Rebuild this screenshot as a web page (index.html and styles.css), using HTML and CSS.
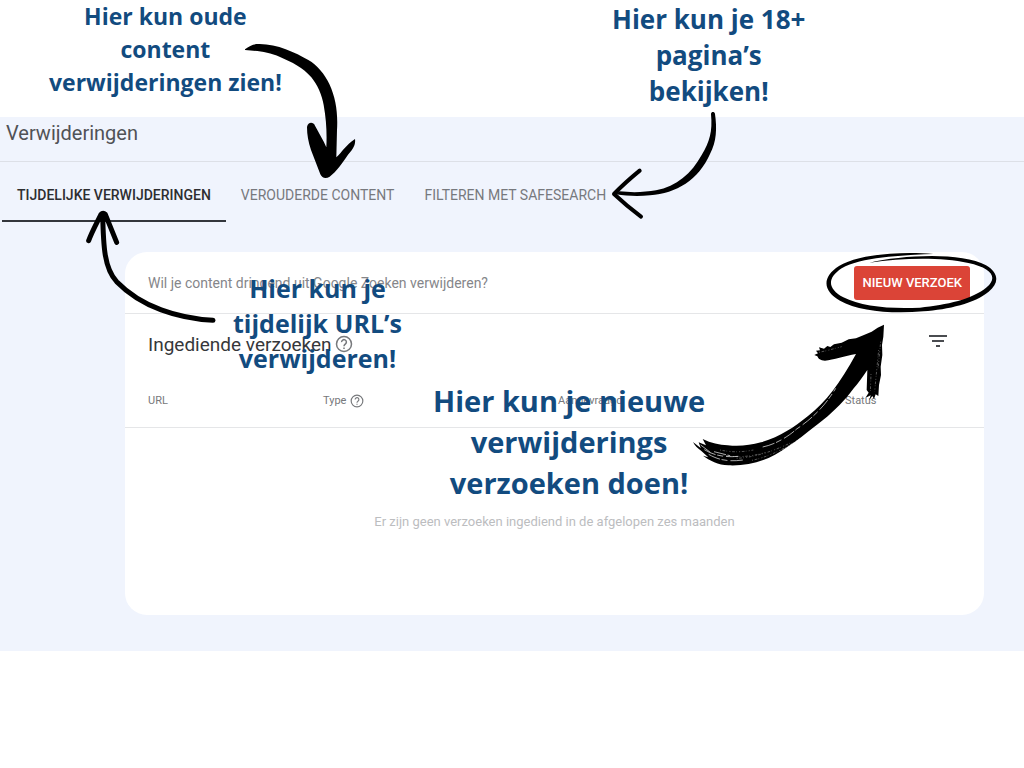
FILE: index.html
```html
<!DOCTYPE html>
<html lang="nl">
<head>
    <meta charset="UTF-8">
    <meta name="viewport" content="width=device-width, initial-scale=1.0">
    <title>Verwijderingen</title>
    <link rel="stylesheet" href="styles.css">
</head>
<body>
    <main class="console">
        <header class="header">
            <h1>Verwijderingen</h1>
        </header>
        <nav class="tabs">
            <a href="#tijdelijk" class="tab active">TIJDELIJKE VERWIJDERINGEN</a>
            <a href="#verouderd" class="tab">VEROUDERDE CONTENT</a>
            <a href="#safesearch" class="tab">FILTEREN MET SAFESEARCH</a>
        </nav>
        <section class="card" id="tijdelijk">
            <div class="card-top">
                <p>Wil je content dringend uit Google Zoeken verwijderen?</p>
                <button type="button" class="new-request">NIEUW VERZOEK</button>
            </div>
            <div class="card-title">
                <h2>Ingediende verzoeken</h2>
                <svg class="help" viewBox="0 0 24 24" width="18" height="18">
                    <circle cx="12" cy="12" r="10"/>
                    <path d="M8.8 9.5a3.2 3.2 0 1 1 5.2 2.4c-1.2 1-2 1.5-2 3.1M12 16.5v2"/>
                </svg>
                <button type="button" class="filter" aria-label="Filteren">
                    <svg viewBox="0 0 18 12" width="18" height="12">
                        <path d="M0 1h18M3 6h12M7 11h4"/>
                    </svg>
                </button>
            </div>
            <table>
                <thead>
                    <tr>
                        <th class="col-url">URL</th>
                        <th class="col-type">
                            <span class="th-help">Type
                                <svg class="help" viewBox="0 0 24 24" width="14" height="14">
                                    <circle cx="12" cy="12" r="10"/>
                                    <path d="M8.8 9.5a3.2 3.2 0 1 1 5.2 2.4c-1.2 1-2 1.5-2 3.1M12 16.5v2"/>
                                </svg>
                            </span>
                        </th>
                        <th class="col-date">Aangevraagd</th>
                        <th>Status</th>
                    </tr>
                </thead>
                <tbody>
                    <tr>
                        <td colspan="4">Er zijn geen verzoeken ingediend in de afgelopen zes maanden</td>
                    </tr>
                </tbody>
            </table>
        </section>
    </main>

    <!-- uitleg over de pagina heen -->
    <p class="note note-old">Hier kun oude<br>content<br>verwijderingen zien!</p>
    <p class="note note-safe">Hier kun je 18+<br>pagina’s<br>bekijken!</p>
    <p class="note note-temp">Hier kun je<br>tijdelijk URL’s<br>verwijderen!</p>
    <p class="note note-new">Hier kun je nieuwe<br>verwijderings<br>verzoeken doen!</p>

    <svg class="arrow arrow-old" viewBox="0 0 420 480">
        <path d="M45 58C58 47 70 42 86 42C140 41 195 67 235 90C262 105 283 132 298 162C318 205 324 250 321 300L319 382C337 365 348 345 375 327C378 347 365 361 354 374C338 398 320 424 299 440C288 447 276 445 271 433L243 360C235 335 231 315 231 291C234 275 250 275 255 287C268 312 280 330 289 352C291 310 289 270 281 225C276 195 262 164 244 142C220 113 185 96 150 81C115 65 85 63 45 60Z"/>
    </svg>
    <svg class="arrow arrow-safe" viewBox="30 315 390 360">
        <path d="M363 342C364 334 374 335 375 342C381 385 380 425 360 462C325 540 260 580 180 586C145 589 110 588 78 583L88 574C125 578 165 577 198 571C260 559 305 520 335 465C359 425 368 395 363 342Z"/>
        <path class="line" d="M149 512Q105 548 72 582Q108 616 153 650"/>
    </svg>
    <svg class="arrow arrow-temp" viewBox="0 0 480 390">
        <path class="line thick" d="M429 361C325 355 215 322 140 245C103 205 100 140 98 42M56 122C66 95 80 70 93 43Q99 36 106 43L140 127"/>
    </svg>
    <svg class="arrow arrow-circle" viewBox="0 0 600 240">
        <path d="M370 42C280 33 145 42 87 78C33 112 40 155 90 182C145 214 245 222 340 214C415 208 495 190 536 155C570 127 565 98 528 76C455 35 275 45 178 68C275 54 390 50 475 69C545 84 565 112 530 142C488 178 410 195 330 203C240 208 152 199 100 172C54 147 49 116 95 85C153 51 270 46 370 42Z"/>
    </svg>
    <svg class="arrow arrow-new" viewBox="0 0 660 510">
        <path d="M612 44L610 80L606 105L607 135L602 170L603 195L597 225L595 258L587 253L582 267L577 258L568 270L572 256L556 264L566 248L560 240L562 180C547 202 535 219 520 236C495 270 463 303 430 329C388 362 340 402 285 434C241 458 195 468 145 466C115 465 88 451 69 437L85 442L65 424C53 414 45 408 39 396L62 414L56 397L78 406L68 387C93 399 118 405 143 406C178 410 210 406 243 397C300 380 342 352 384 318C438 276 480 220 528 132C495 138 460 149 435 152C421 152 415 146 412 139L403 135L414 130L408 122L420 121L417 112L432 116L442 108L451 111L462 103L485 98L506 88L528 85L550 76L575 65L593 53Z"/>
        <path class="scratch" d="M73 419C100 436 135 443 175 439M86 433C115 450 145 456 190 450M62 405L91 427M102 425L150 437M248 411C292 402 330 375 350 357C405 320 440 280 467 235"/>
        <path class="scratch dust" d="M170 445C220 443 280 424 335 397M216 451C272 439 320 413 371 378M120 420C150 426 180 428 220 420M300 424L362 389M130 435C170 444 210 440 255 428M417 127L440 122L485 110M596 120L589 192L584 244M573 192L571 247M602 95L594 178"/>
    </svg>
</body>
</html>
```

FILE: styles.css
```css
body {
    font-family: Roboto, Arial, sans-serif;
    background-color: #fff;
    margin: 0;
    padding-top: 117px;
    position: relative;
}
h1, h2, p {
    margin: 0;
    font-weight: normal;
}
.console {
    background-color: #f0f4fd;
    padding-bottom: 36px;
}
.header {
    height: 44px;
    padding: 0 6px;
    border-bottom: 1px solid #dde0e7;
}
h1 {
    color: #505256;
    font-size: 20px;
    line-height: 32px;
}
.tabs {
    display: flex;
    padding-left: 2px;
}
.tab {
    box-sizing: border-box;
    height: 60px;
    padding: 0 15px;
    color: #77797e;
    font-size: 14px;
    line-height: 66px;
    text-decoration: none;
    white-space: nowrap;
}
.tab.active {
    color: #2d2e31;
    font-weight: 500;
    border-bottom: 2px solid #33363c;
}
.card {
    margin: 30px 40px 0 125px;
    min-height: 363px;
    background-color: #fff;
    border-radius: 22px;
}
.card-top {
    display: flex;
    align-items: center;
    justify-content: space-between;
    height: 61px;
    padding: 0 14px 0 23px;
    border-bottom: 1px solid #e5e6e8;
    color: #85868a;
    font-size: 14px;
}
.new-request {
    height: 34px;
    padding: 0 8px;
    border: none;
    border-radius: 3px;
    background-color: #db4437;
    color: #fff;
    font-family: inherit;
    font-size: 13px;
    font-weight: 500;
    cursor: pointer;
}
.card-title {
    display: flex;
    align-items: center;
    gap: 3px;
    height: 60px;
    padding: 0 37px 0 23px;
}
h2 {
    color: #36373a;
    font-size: 19px;
}
.help {
    fill: none;
    stroke: #77797c;
    stroke-width: 2;
}
.filter {
    display: flex;
    margin-left: auto;
    padding: 0 0 7px;
    border: none;
    background: none;
    cursor: pointer;
}
.filter svg {
    fill: none;
    stroke: #4a4c50;
    stroke-width: 2;
}
table {
    width: 100%;
    border-collapse: collapse;
    table-layout: fixed;
}
th {
    height: 53px;
    padding: 0 0 0 23px;
    border-bottom: 1px solid #e5e6e8;
    color: #77787b;
    font-size: 11px;
    font-weight: normal;
    text-align: left;
}
.col-url {
    width: 152px;
}
.col-type {
    width: 212px;
}
.col-date {
    width: 264px;
}
.th-help {
    display: flex;
    align-items: center;
    gap: 4px;
}
td {
    height: 186px;
    padding: 0;
    color: #bcbdbf;
    font-size: 13px;
    text-align: center;
}

.note {
    position: absolute;
    color: #124b7f;
    font-family: "Open Sans", sans-serif;
    font-weight: bold;
    text-align: center;
    white-space: nowrap;
}
.note-old {
    left: 49px;
    top: 0;
    font-size: 23px;
    line-height: 33px;
}
.note-safe {
    left: 612px;
    top: 1px;
    font-size: 26px;
    line-height: 36px;
}
.note-temp {
    left: 233px;
    top: 271px;
    font-size: 25px;
    line-height: 35px;
}
.note-new {
    left: 433px;
    top: 380px;
    font-size: 29px;
    line-height: 41px;
}

.arrow {
    position: absolute;
    pointer-events: none;
}
.arrow .line {
    fill: none;
    stroke: #000;
    stroke-width: 12;
    stroke-linecap: round;
    stroke-linejoin: round;
}
.arrow .thick {
    stroke-width: 15;
}
.arrow .scratch {
    fill: none;
    stroke: #fff;
    stroke-width: 2;
    stroke-dasharray: 37 5 18 9;
}
.arrow .dust {
    stroke-width: 1;
    stroke-dasharray: 3 5 8 4 2 7;
}
.arrow-old {
    left: 230px;
    top: 30px;
    width: 140px;
    height: 160px;
}
.arrow-safe {
    left: 600px;
    top: 105px;
    width: 130px;
    height: 120px;
}
.arrow-temp {
    left: 70px;
    top: 200px;
    width: 160px;
    height: 130px;
}
.arrow-circle {
    left: 810px;
    top: 240px;
    width: 200px;
    height: 80px;
}
.arrow-new {
    left: 680px;
    top: 310px;
    width: 220px;
    height: 170px;
}
```
